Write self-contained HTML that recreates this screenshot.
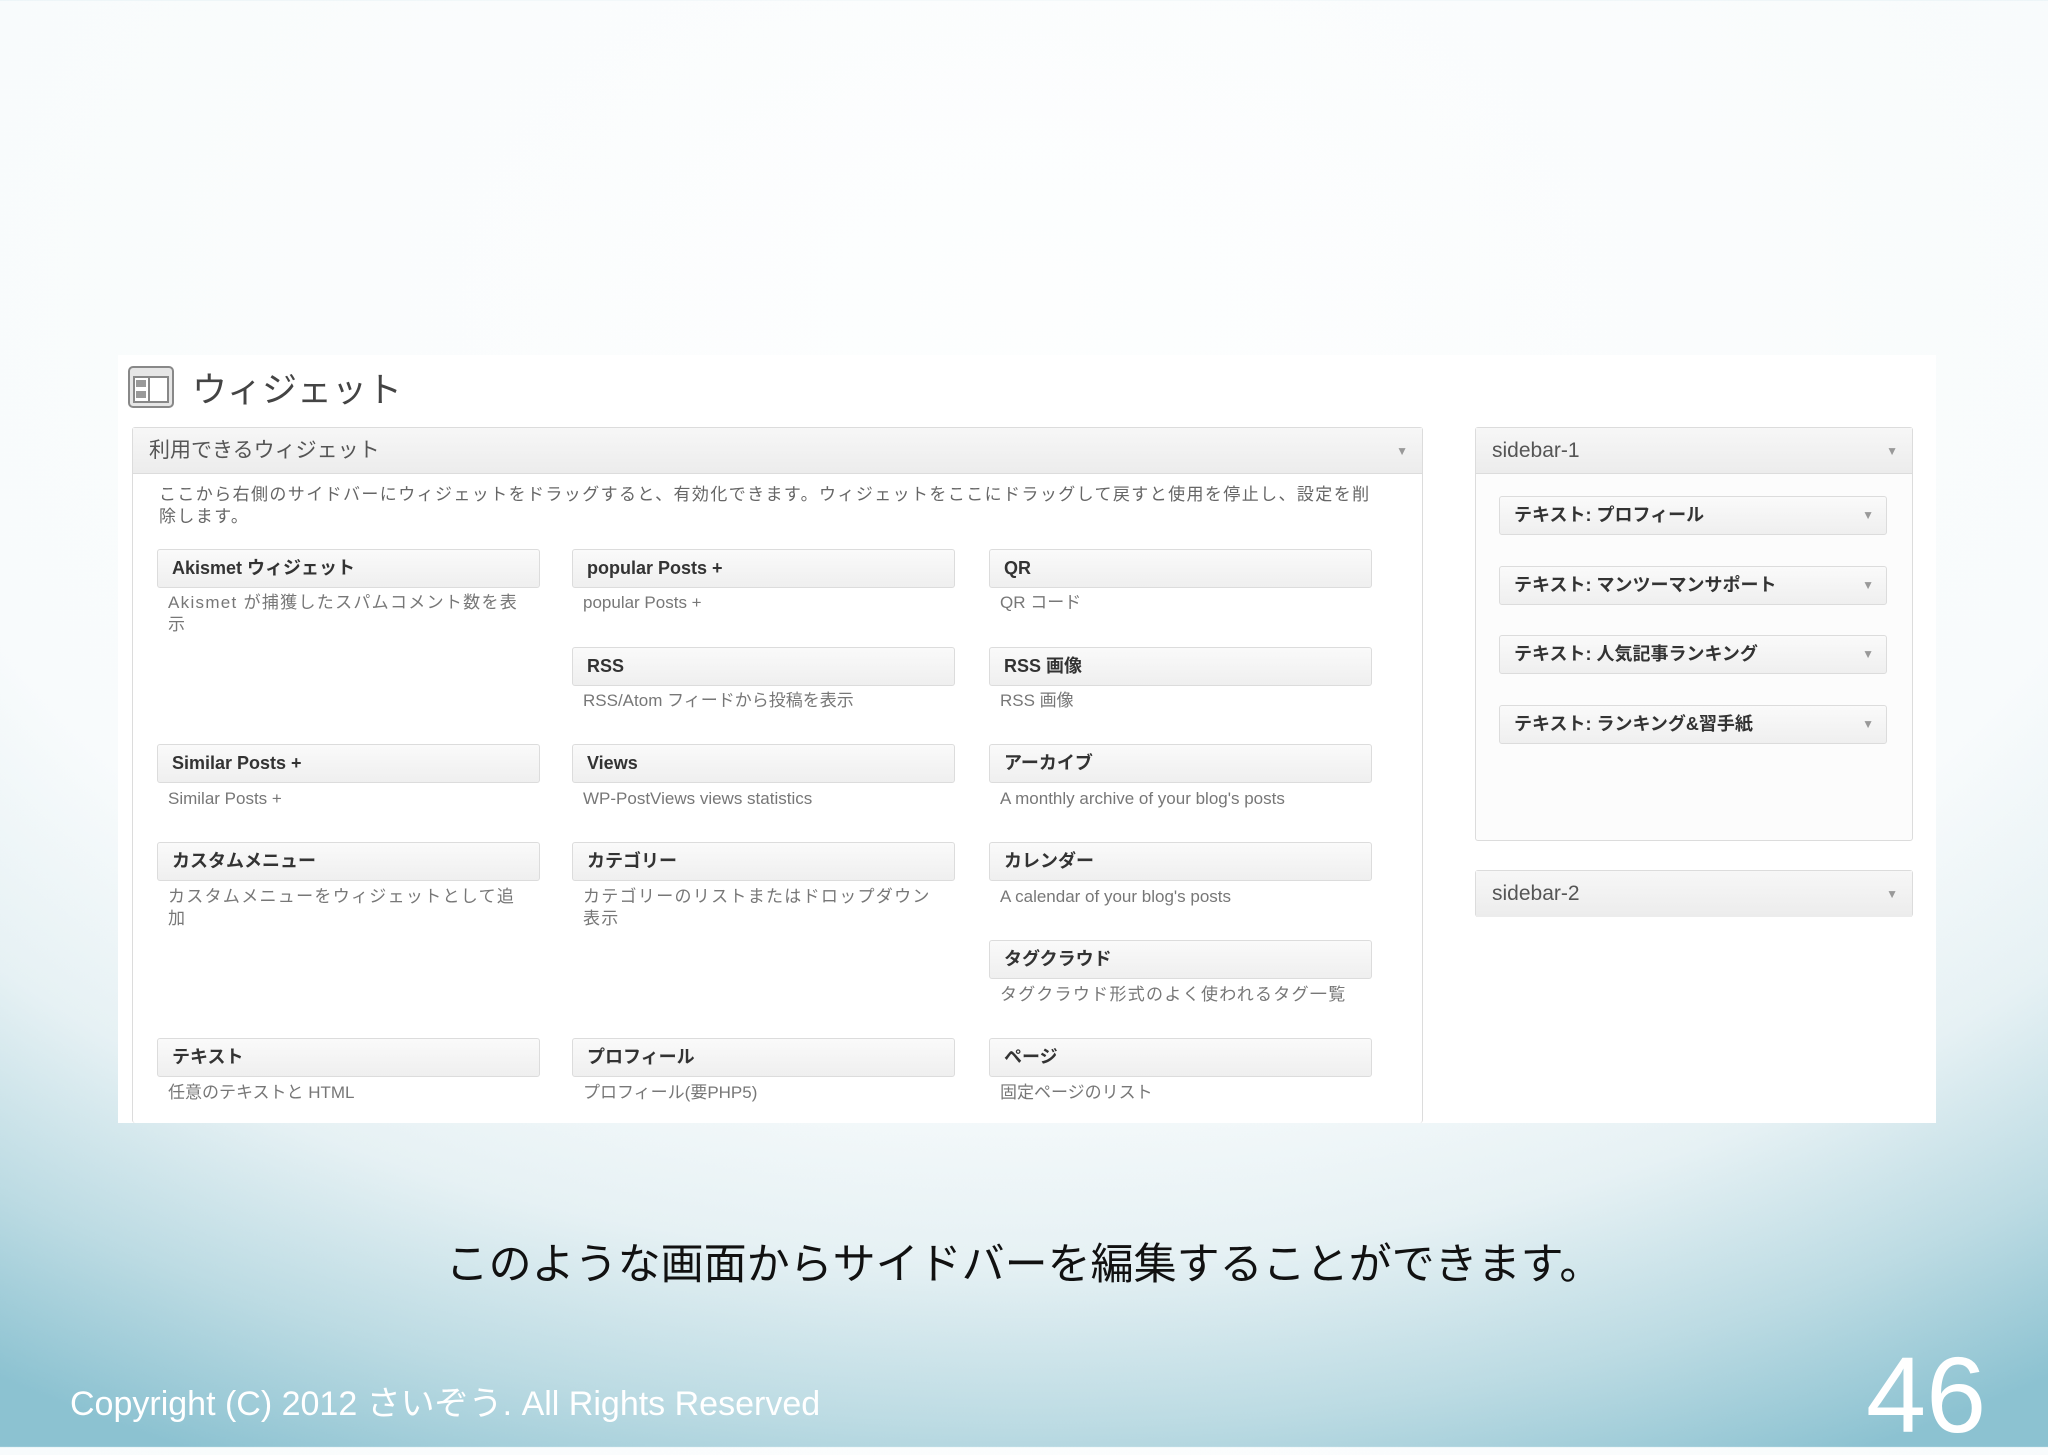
<!DOCTYPE html>
<html><head><meta charset="utf-8"><style>
*{margin:0;padding:0;box-sizing:border-box}
body{width:2048px;height:1447px;overflow:hidden;position:relative;font-family:"Liberation Sans","Noto Sans CJK JP",sans-serif;
background:radial-gradient(ellipse 1900px 1280px at 1024px 300px,#fdfefe 0%,#f8fbfc 60%,#e6f1f4 75%,#bcdbe3 88%,#8cc2d1 100%),#7fb8c9;}
.abs{position:absolute}
.panel{left:118px;top:355px;width:1818px;height:768px;background:#fff}
.box{border:1px solid #dcdcdc;border-radius:3px;background:#fcfcfc}
.hdr{height:46px;background:linear-gradient(#f7f7f7,#ececec);border-bottom:1px solid #dcdcdc;font-size:21px;color:#555;line-height:46px;padding-left:16px;position:relative}
.arr{position:absolute;right:14px;top:0;font-size:12px;color:#999}
.w{position:absolute;width:383px;height:39px;border:1px solid #dcdcdc;border-radius:3px;background:linear-gradient(#fafafa,#efefef);font-size:18px;font-weight:bold;color:#333;line-height:37px;padding-left:14px}
.d{position:absolute;width:380px;font-size:17px;color:#777;line-height:22px;padding-left:11px;white-space:nowrap}
.j{letter-spacing:1.3px}
.s{position:absolute;left:23px;width:388px;height:39px;border:1px solid #dcdcdc;border-radius:3px;background:linear-gradient(#fafafa,#efefef);font-size:18px;font-weight:bold;color:#333;line-height:37px;padding-left:14px}
.s .arr{right:12px}
</style></head><body>
<div class="abs panel"></div>
<svg class="abs" style="left:128px;top:366px" width="46" height="42" viewBox="0 0 46 42"><rect x="1" y="1" width="44" height="40" rx="4" fill="#e6e6e6" stroke="#888" stroke-width="2"/><rect x="6" y="11" width="34" height="25" fill="#fff" stroke="#888" stroke-width="2"/><rect x="8" y="14" width="10" height="7" fill="#999"/><rect x="8" y="25" width="10" height="7" fill="#999"/><line x1="21" y1="12" x2="21" y2="35" stroke="#888" stroke-width="2"/></svg>
<div class="abs" style="left:192px;top:362px;font-size:35px;color:#444">ウィジェット</div>
<div class="abs box" style="left:132px;top:427px;width:1291px;height:696px;background:#fff;border-bottom:none">
<div class="hdr">利用できるウィジェット<span class="arr">▼</span></div>
<div class="abs" style="left:26px;top:56px;width:1260px;font-size:17px;color:#666;line-height:22px;letter-spacing:1.4px;white-space:nowrap">ここから右側のサイドバーにウィジェットをドラッグすると、有効化できます。ウィジェットをここにドラッグして戻すと使用を停止し、設定を削<br>除します。</div>
</div>
<div class="w" style="left:157px;top:549px">Akismet ウィジェット</div><div class="d j" style="left:157px;top:592px">Akismet が捕獲したスパムコメント数を表<br>示</div>
<div class="w" style="left:572px;top:549px">popular Posts +</div><div class="d" style="left:572px;top:592px">popular Posts +</div>
<div class="w" style="left:989px;top:549px">QR</div><div class="d" style="left:989px;top:592px">QR コード</div>
<div class="w" style="left:572px;top:647px">RSS</div><div class="d" style="left:572px;top:690px">RSS/Atom フィードから投稿を表示</div>
<div class="w" style="left:989px;top:647px">RSS 画像</div><div class="d" style="left:989px;top:690px">RSS 画像</div>
<div class="w" style="left:157px;top:744px">Similar Posts +</div><div class="d" style="left:157px;top:788px">Similar Posts +</div>
<div class="w" style="left:572px;top:744px">Views</div><div class="d" style="left:572px;top:788px">WP-PostViews views statistics</div>
<div class="w" style="left:989px;top:744px">アーカイブ</div><div class="d" style="left:989px;top:788px">A monthly archive of your blog's posts</div>
<div class="w" style="left:157px;top:842px">カスタムメニュー</div><div class="d j" style="left:157px;top:886px">カスタムメニューをウィジェットとして追<br>加</div>
<div class="w" style="left:572px;top:842px">カテゴリー</div><div class="d j" style="left:572px;top:886px">カテゴリーのリストまたはドロップダウン<br>表示</div>
<div class="w" style="left:989px;top:842px">カレンダー</div><div class="d" style="left:989px;top:886px">A calendar of your blog's posts</div>
<div class="w" style="left:989px;top:940px">タグクラウド</div><div class="d j" style="left:989px;top:984px">タグクラウド形式のよく使われるタグ一覧</div>
<div class="w" style="left:157px;top:1038px">テキスト</div><div class="d" style="left:157px;top:1082px">任意のテキストと HTML</div>
<div class="w" style="left:572px;top:1038px">プロフィール</div><div class="d" style="left:572px;top:1082px">プロフィール(要PHP5)</div>
<div class="w" style="left:989px;top:1038px">ページ</div><div class="d" style="left:989px;top:1082px">固定ページのリスト</div>
<div class="abs box" style="left:1475px;top:427px;width:438px;height:414px">
<div class="hdr">sidebar-1<span class="arr">▼</span></div>
<div class="s" style="top:68px">テキスト: プロフィール<span class="arr">▼</span></div>
<div class="s" style="top:138px">テキスト: マンツーマンサポート<span class="arr">▼</span></div>
<div class="s" style="top:207px">テキスト: 人気記事ランキング<span class="arr">▼</span></div>
<div class="s" style="top:277px">テキスト: ランキング&amp;習手紙<span class="arr">▼</span></div>
</div>
<div class="abs box" style="left:1475px;top:870px;width:438px;height:47px"><div class="hdr" style="border:none">sidebar-2<span class="arr">▼</span></div></div>
<div class="abs" style="left:0;width:2048px;top:1230px;text-align:center;font-size:43px;color:#111">このような画面からサイドバーを編集することができます。</div>
<div class="abs" style="left:70px;top:1376px;font-size:34px;color:#fff">Copyright (C) 2012 さいぞう. All Rights Reserved</div>
<div class="abs" style="left:1866px;top:1335px;font-size:108px;color:#fff;line-height:120px">46</div>
</body></html>
